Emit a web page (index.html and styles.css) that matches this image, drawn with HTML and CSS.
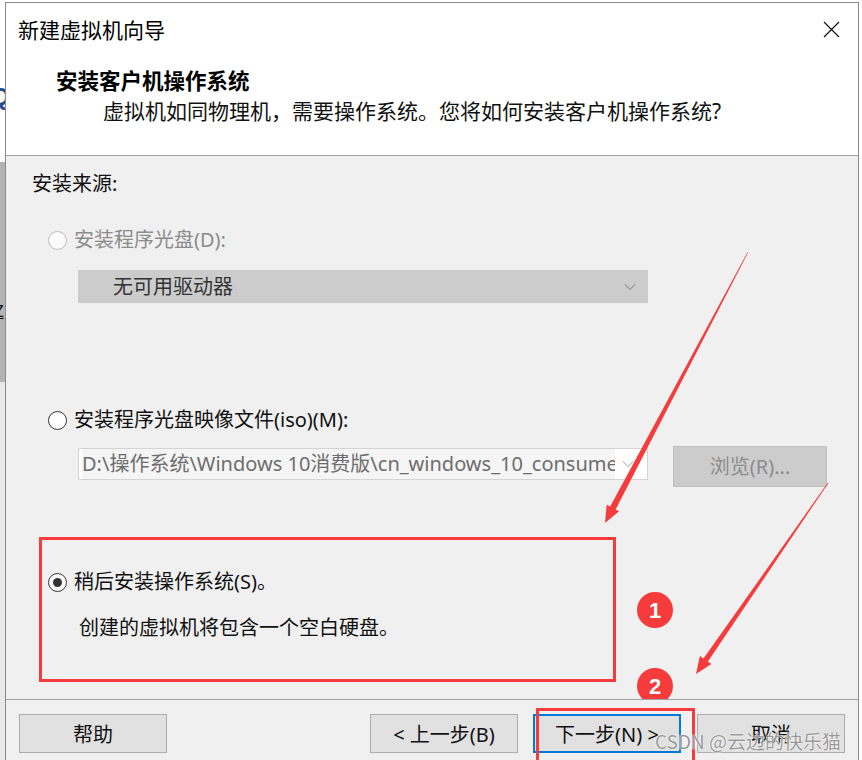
FILE: index.html
```html
<!DOCTYPE html>
<html lang="zh-CN">
<head>
<meta charset="utf-8">
<title>新建虚拟机向导</title>
<link rel="stylesheet" href="styles.css">
</head>
<body>
<div class="screen">
  <div class="bgstrip">
    <div class="bg-top"><span class="bg-q">Q</span></div>
    <div class="bg-gray"><span class="bg-z">Z</span></div>
    <div class="bg-rest"></div>
  </div>
  <div class="window">
    <div class="top">
      <div class="titlebar">
        <span class="title">新建虚拟机向导</span>
        <svg class="close" width="17" height="17" viewBox="0 0 17 17"><path d="M1 1L16 16M16 1L1 16" stroke="#111" stroke-width="1.2" fill="none"/></svg>
      </div>
      <div class="header">
        <div class="h-title">安装客户机操作系统</div>
        <div class="h-sub">虚拟机如同物理机，需要操作系统。您将如何安装客户机操作系统?</div>
      </div>
    </div>
    <div class="body">
      <div class="section-label">安装来源:</div>
      <div class="radio-row disabled"><span class="radio"></span><span>安装程序光盘(D):</span></div>
      <div class="select">
        <span class="select-text">无可用驱动器</span>
        <svg class="chev" width="12" height="8" viewBox="0 0 12 8"><path d="M1 1.5L6 6.5L11 1.5" stroke="#9a9a9a" stroke-width="1.2" fill="none"/></svg>
      </div>
      <div class="radio-row iso"><span class="radio"></span><span>安装程序光盘映像文件(iso)(M):</span></div>
      <div class="iso-row">
        <div class="combo">
          <span class="combo-text">D:\操作系统\Windows 10消费版\cn_windows_10_consumer_editions</span>
          <svg class="chev2" width="12" height="8" viewBox="0 0 12 8"><path d="M1 1.5L6 6.5L11 1.5" stroke="#c4c4c4" stroke-width="1.2" fill="none"/></svg>
        </div>
        <div class="browse">浏览(R)...</div>
      </div>
      <div class="radio-row later"><span class="radio checked"></span><span>稍后安装操作系统(S)。</span></div>
      <div class="desc">创建的虚拟机将包含一个空白硬盘。</div>
      <svg class="annot" width="862" height="760" viewBox="0 0 862 760">
        <rect x="40.5" y="538.5" width="574" height="142" fill="none" stroke="#f53b3b" stroke-width="3"/>
        <polygon fill="#f53b3b" points="748.3,252.1 615.6,509.4 619.1,511.3 605,523 606.7,504.7 610.2,506.6 747.7,251.9"/>
        <polygon fill="#f53b3b" points="828.3,483.2 707.9,661.5 711.4,664.0 696,674 699.9,656.0 703.5,658.5 827.7,482.8"/>
        <circle cx="655" cy="610" r="18" fill="#f53b3b"/>
        <text x="655" y="618" text-anchor="middle" class="num">1</text>
        <circle cx="655" cy="686" r="18" fill="#f53b3b"/>
        <text x="655" y="694" text-anchor="middle" class="num">2</text>
      </svg>
    </div>
    <div class="footer">
      <div class="btn help">帮助</div>
      <div class="btn prev">&lt; 上一步(B)</div>
      <div class="btn next">下一步(N) &gt;</div>
      <div class="btn cancel">取消</div>
      <div class="next-mark"></div>
      <div class="watermark">CSDN @云边的快乐猫</div>
    </div>
  </div>
</div>
</body>
</html>
```

FILE: styles.css
```css
* { box-sizing: border-box; }
html, body { margin: 0; padding: 0; }
body {
  width: 862px;
  height: 760px;
  overflow: hidden;
  background: #ffffff;
  font-family: "Noto Sans", "Noto Sans CJK SC", sans-serif;
  color: #000;
}
.screen {
  display: flex;
  width: 862px;
  height: 760px;
  overflow: hidden;
}
.bgstrip {
  width: 5px;
  flex: 0 0 5px;
  display: flex;
  flex-direction: column;
  overflow: hidden;
}
.bg-top {
  height: 162px;
  background: #ffffff;
  overflow: hidden;
  padding-top: 82px;
}
.bg-q {
  display: block;
  margin-left: -9px;
  font: bold 24px/30px "Liberation Sans", sans-serif;
  color: #2b4a8f;
}
.bg-gray {
  height: 220px;
  background: #b3b3b3;
  overflow: hidden;
  padding-top: 140px;
}
.bg-z {
  display: block;
  margin-left: -6px;
  font: 16px/20px "Liberation Sans", sans-serif;
  color: #111;
  text-decoration: underline;
}
.bg-rest {
  flex: 1;
  background: #e9e9e9;
}
.window {
  width: 854px;
  flex: 0 0 854px;
  margin-top: 2px;
  border: 1px solid #8a8a8a;
  border-bottom: none;
  display: flex;
  flex-direction: column;
  background: #f0f0f0;
}
.top {
  height: 153px;
  background: #ffffff;
  border-bottom: 1px solid #a0a0a0;
}
.titlebar {
  height: 52px;
  display: flex;
  align-items: center;
  justify-content: space-between;
  padding: 0 18px 0 12px;
}
.title {
  font-size: 21px;
  line-height: 30px;
  font-family: "Noto Sans CJK SC", sans-serif;
}
.close { display: block; }
.header { padding-top: 10px; }
.h-title {
  padding-left: 50px;
  font-size: 21.5px;
  line-height: 30px;
  font-weight: bold;
  font-family: "Noto Sans CJK SC", sans-serif;
}
.h-sub {
  margin-top: 1px;
  padding-left: 97px;
  font-size: 21px;
  line-height: 30px;
  color: #111;
}
.body {
  position: relative;
  height: 543px;
  padding-top: 13px;
  overflow: hidden;
  font-size: 20px;
  line-height: 30px;
}
.section-label {
  padding-left: 26px;
  color: #111;
}
.radio-row {
  display: flex;
  align-items: center;
  padding-left: 42px;
  height: 30px;
  color: #111;
}
.radio-row.disabled { margin-top: 26px; color: #8c8c8c; }
.radio-row.iso { margin-top: 102px; }
.radio-row.later { margin-top: 80px; }
.radio {
  width: 19px;
  height: 19px;
  border: 1px solid #333;
  border-radius: 50%;
  background: #fff;
  margin-right: 7px;
  display: flex;
  align-items: center;
  justify-content: center;
  flex: 0 0 19px;
}
.radio-row.disabled .radio { border-color: #bcbcbc; background: #fbfbfb; }
.radio.checked::after {
  content: "";
  width: 9px;
  height: 9px;
  border-radius: 50%;
  background: #333;
}
.select {
  margin: 15px 0 0 72px;
  width: 570px;
  height: 33px;
  background: #cccccc;
  display: flex;
  align-items: center;
  justify-content: space-between;
  padding: 0 12px 0 35px;
}
.select-text { color: #333; }
.iso-row {
  display: flex;
  margin: 11px 0 0 72px;
}
.combo {
  margin-top: 2px;
  width: 570px;
  height: 32px;
  background: #fff;
  border: 1px solid #d4d4d4;
  display: flex;
  align-items: center;
  padding: 0 13px 0 3px;
}
.combo-text {
  width: 533px;
  white-space: nowrap;
  overflow: hidden;
  color: #6d6d6d;
  background: #f5f5f5;
  flex: 0 0 533px;
}
.chev2 { margin-left: auto; }
.browse {
  margin-left: 25px;
  width: 154px;
  height: 41px;
  background: #cccccc;
  border: 1px solid #c0c0c0;
  color: #8c8c8c;
  display: flex;
  align-items: center;
  justify-content: center;
}
.desc {
  margin-top: 16px;
  padding-left: 73px;
  color: #111;
}
.annot {
  position: absolute;
  left: -6px;
  top: -156px;
  pointer-events: none;
}
.num {
  fill: #fff;
  font: bold 22px "Liberation Sans", sans-serif;
}
.footer {
  position: relative;
  flex: 1;
  border-top: 1px solid #a0a0a0;
  padding: 14px 12px 0 13px;
  display: flex;
  align-items: flex-start;
}
.btn {
  width: 148px;
  height: 39px;
  background: #e1e1e1;
  border: 1px solid #adadad;
  display: flex;
  align-items: center;
  justify-content: center;
  font-size: 20px;
  color: #111;
}
.help { margin-right: 203px; }
.prev { margin-right: 15px; }
.next { border: 2px solid #0078d7; margin-right: 16px; }
.next-mark {
  position: absolute;
  left: 530px;
  top: 8px;
  width: 159px;
  height: 70px;
  border: 3px solid #f53b3b;
}
.watermark {
  position: absolute;
  left: 649px;
  top: 26px;
  font-family: "Noto Sans CJK SC", sans-serif;
  font-size: 19px;
  line-height: 30px;
  color: rgba(120, 120, 120, 0.75);
  text-shadow: 0 0 2px #fff, 0 0 1px #fff;
  white-space: nowrap;
}
```
